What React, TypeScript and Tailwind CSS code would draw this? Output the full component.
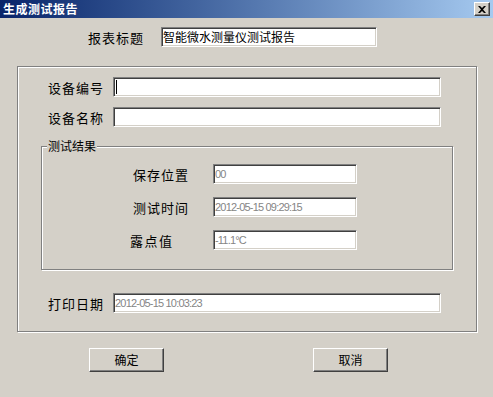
import type { ReactNode } from "react";

const cjk = "font-['SimSun','Noto_Sans_CJK_SC',sans-serif]";

function Field({
  width,
  children,
}: {
  width: string;
  children?: ReactNode;
}) {
  return (
    <div
      className={`${width} h-[20px] shrink-0 bg-white border border-t-[#808080] border-l-[#808080] border-b-white border-r-white shadow-[inset_1px_1px_#404040,inset_-1px_-1px_#d4d0c8] flex items-center pl-[1px] overflow-hidden`}
    >
      {children}
    </div>
  );
}

function GrayText({ children }: { children: ReactNode }) {
  return (
    <span className="font-[Liberation_Sans,Arial,sans-serif] text-[11px] leading-none tracking-[-0.8px] text-[#858585]">
      {children}
    </span>
  );
}

function Button({ label }: { label: string }) {
  return (
    <div className="w-[75px] h-[24px] shrink-0 border border-t-white border-l-white border-b-[#404040] border-r-[#404040] shadow-[inset_-1px_-1px_#808080] flex items-center justify-center text-[12px] leading-none text-black">
      {label}
    </div>
  );
}

export default function App() {
  return (
    <div
      className={`w-[493px] h-[397px] bg-[#d4d0c8] overflow-hidden ${cjk} text-black`}
    >
      {/* title bar */}
      <div className="h-[18px] flex items-center pl-[3px] pr-[3px] bg-gradient-to-r from-[#0a246a] to-[#a6caf0]">
        <span className="text-white font-bold text-[12px] leading-none tracking-[0.5px]">
          生成测试报告
        </span>
        <div className="ml-auto w-[16px] h-[14px] bg-[#d4d0c8] border border-t-white border-l-white border-b-[#404040] border-r-[#404040] shadow-[inset_-1px_-1px_#808080] flex items-center justify-center">
          <svg width="8" height="7" viewBox="0 0 8 7">
            <path
              d="M0 0h2l2 2 2-2h2L5 3.5 8 7H6L4 5 2 7H0l3-3.5z"
              fill="#000"
            />
          </svg>
        </div>
      </div>

      {/* report title */}
      <div className="mt-[9px] flex items-center pl-[88px]">
        <div className="w-[73px] text-[13px] leading-none tracking-[1px]">
          报表标题
        </div>
        <Field width="w-[216px]">
          <span className="text-[12px] leading-none">智能微水测量仪测试报告</span>
        </Field>
      </div>

      {/* outer group */}
      <div className="mt-[19px] ml-[17px] w-[460px] h-[266px] border border-[#808080] shadow-[inset_1px_1px_#fff,1px_1px_#fff]">
        <div className="mt-[10px] pl-[30px] flex items-center">
          <div className="w-[65px] text-[13px] leading-none tracking-[1px]">
            设备编号
          </div>
          <Field width="w-[328px]">
            <span className="ml-[1px] w-[1px] h-[14px] bg-black" />
          </Field>
        </div>
        <div className="mt-[10px] pl-[30px] flex items-center">
          <div className="w-[65px] text-[13px] leading-none tracking-[1px]">
            设备名称
          </div>
          <Field width="w-[328px]" />
        </div>

        {/* inner group */}
        <div className="relative mt-[19px] ml-[23px] w-[412px] h-[124px] border border-[#808080] shadow-[inset_1px_1px_#fff,1px_1px_#fff]">
          <span className="absolute left-[5px] -top-[8px] px-[1px] bg-[#d4d0c8] text-[12px] leading-[14px]">
            测试结果
          </span>
          <div className="mt-[17px] pl-[91px] flex items-center">
            <div className="w-[80px] text-[13px] leading-none tracking-[1px]">
              保存位置
            </div>
            <Field width="w-[144px]">
              <GrayText>00</GrayText>
            </Field>
          </div>
          <div className="mt-[13px] pl-[91px] flex items-center">
            <div className="w-[80px] text-[13px] leading-none tracking-[1px]">
              测试时间
            </div>
            <Field width="w-[144px]">
              <GrayText>2012-05-15 09:29:15</GrayText>
            </Field>
          </div>
          <div className="mt-[13px] pl-[88px] flex items-center">
            <div className="w-[83px] text-[13px] leading-none tracking-[1.5px]">
              露点值
            </div>
            <Field width="w-[144px]">
              <GrayText>-11.1°C</GrayText>
            </Field>
          </div>
        </div>

        <div className="mt-[23px] pl-[30px] flex items-center">
          <div className="w-[65px] text-[13px] leading-none tracking-[1px]">
            打印日期
          </div>
          <Field width="w-[328px]">
            <GrayText>2012-05-15 10:03:23</GrayText>
          </Field>
        </div>
      </div>

      {/* buttons */}
      <div className="mt-[16px] pl-[89px] flex gap-[149px]">
        <Button label="确定" />
        <Button label="取消" />
      </div>
    </div>
  );
}
